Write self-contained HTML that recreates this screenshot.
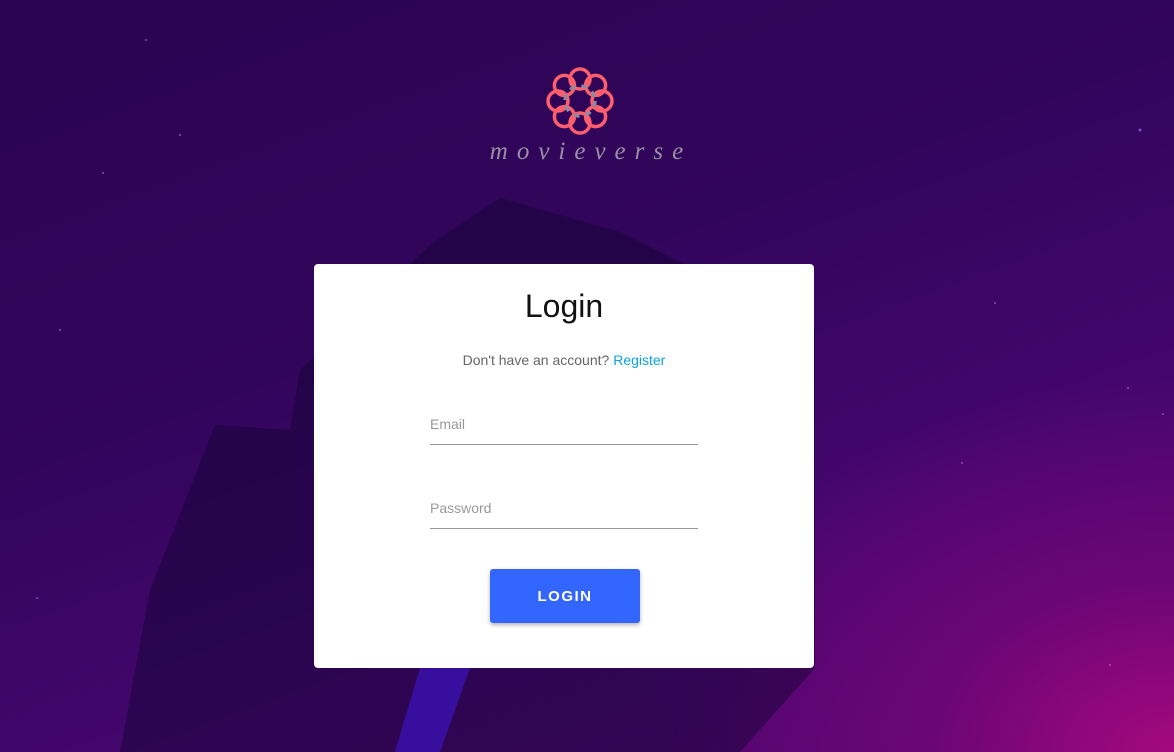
<!DOCTYPE html>
<html><head><meta charset="utf-8"><style>
html,body{margin:0;padding:0;width:1174px;height:752px;overflow:hidden;font-family:"Liberation Sans",sans-serif}
body{background:radial-gradient(ellipse 700px 500px at 1174px 752px,#a5087e 0%,#6a0676 35%,rgba(60,5,90,0) 75%),linear-gradient(160deg,#2a0452 0%,#32055c 40%,#45066e 70%,#5a0672 100%);position:relative}
svg.bg{position:absolute;left:0;top:0}
.card{position:absolute;left:314px;top:264px;width:500px;height:404px;background:#fff;border-radius:4px}
h1{margin:0;position:absolute;top:24px;width:100%;text-align:center;font-weight:400;font-size:32px;color:#111}
.sub{position:absolute;top:88px;width:100%;text-align:center;font-size:14px;color:#666}
.sub span{color:#0aa3e0}
.f{position:absolute;left:116px;width:268px;border-bottom:1px solid #999;font-size:14px;color:#999;padding-bottom:12px}
.btn{position:absolute;left:176px;top:305px;width:150px;height:54px;background:#3366ff;border-radius:3px;box-shadow:0 2px 4px rgba(0,0,0,.3);color:#fff;font-weight:700;font-size:15px;letter-spacing:1.5px;text-align:center;line-height:56px}
.logo{position:absolute;left:4px;width:1174px;top:138px;text-align:center;font-family:"Liberation Serif",serif;font-style:italic;font-size:25px;letter-spacing:9px;color:#9a8fa6}
</style></head><body>
<svg class="bg" width="1174" height="752">
<polygon points="120,752 150,590 215,425 290,430 300,370 430,245 500,198 620,232 815,330 815,668 740,752" fill="#150335" opacity=".5"/>
<polygon points="395,752 420,668 470,668 440,752" fill="#3a10b0" opacity=".8"/>
<g fill="#b080ff" opacity=".6">
<circle cx="146" cy="40" r="1"/><circle cx="103" cy="173" r="1"/><circle cx="60" cy="330" r="1"/><circle cx="1140" cy="130" r="1.5"/><circle cx="995" cy="303" r="1"/><circle cx="1128" cy="388" r="1"/><circle cx="962" cy="463" r="1"/><circle cx="1163" cy="414" r="1"/><circle cx="1110" cy="665" r="1"/><circle cx="37" cy="598" r="1"/><circle cx="180" cy="135" r="1"/></g>
<g transform="translate(580,101)" fill="none" stroke-width="3.5">
<g stroke="#ff5f6d">
<circle cx="0" cy="-22" r="10"/><circle cx="15.6" cy="-15.6" r="10"/><circle cx="22" cy="0" r="10"/><circle cx="15.6" cy="15.6" r="10"/><circle cx="0" cy="22" r="10"/><circle cx="-15.6" cy="15.6" r="10"/><circle cx="-22" cy="0" r="10"/><circle cx="-15.6" cy="-15.6" r="10"/>
</g>
<circle r="15" stroke="#8a8aa0" stroke-dasharray="6 6"/>
</g>
</svg>
<div class="logo">movieverse</div>
<div class="card">
<h1>Login</h1>
<div class="sub">Don't have an account? <span>Register</span></div>
<div class="f" style="top:152px">Email</div>
<div class="f" style="top:236px">Password</div>
<div class="btn">LOGIN</div>
</div>
</body></html>
